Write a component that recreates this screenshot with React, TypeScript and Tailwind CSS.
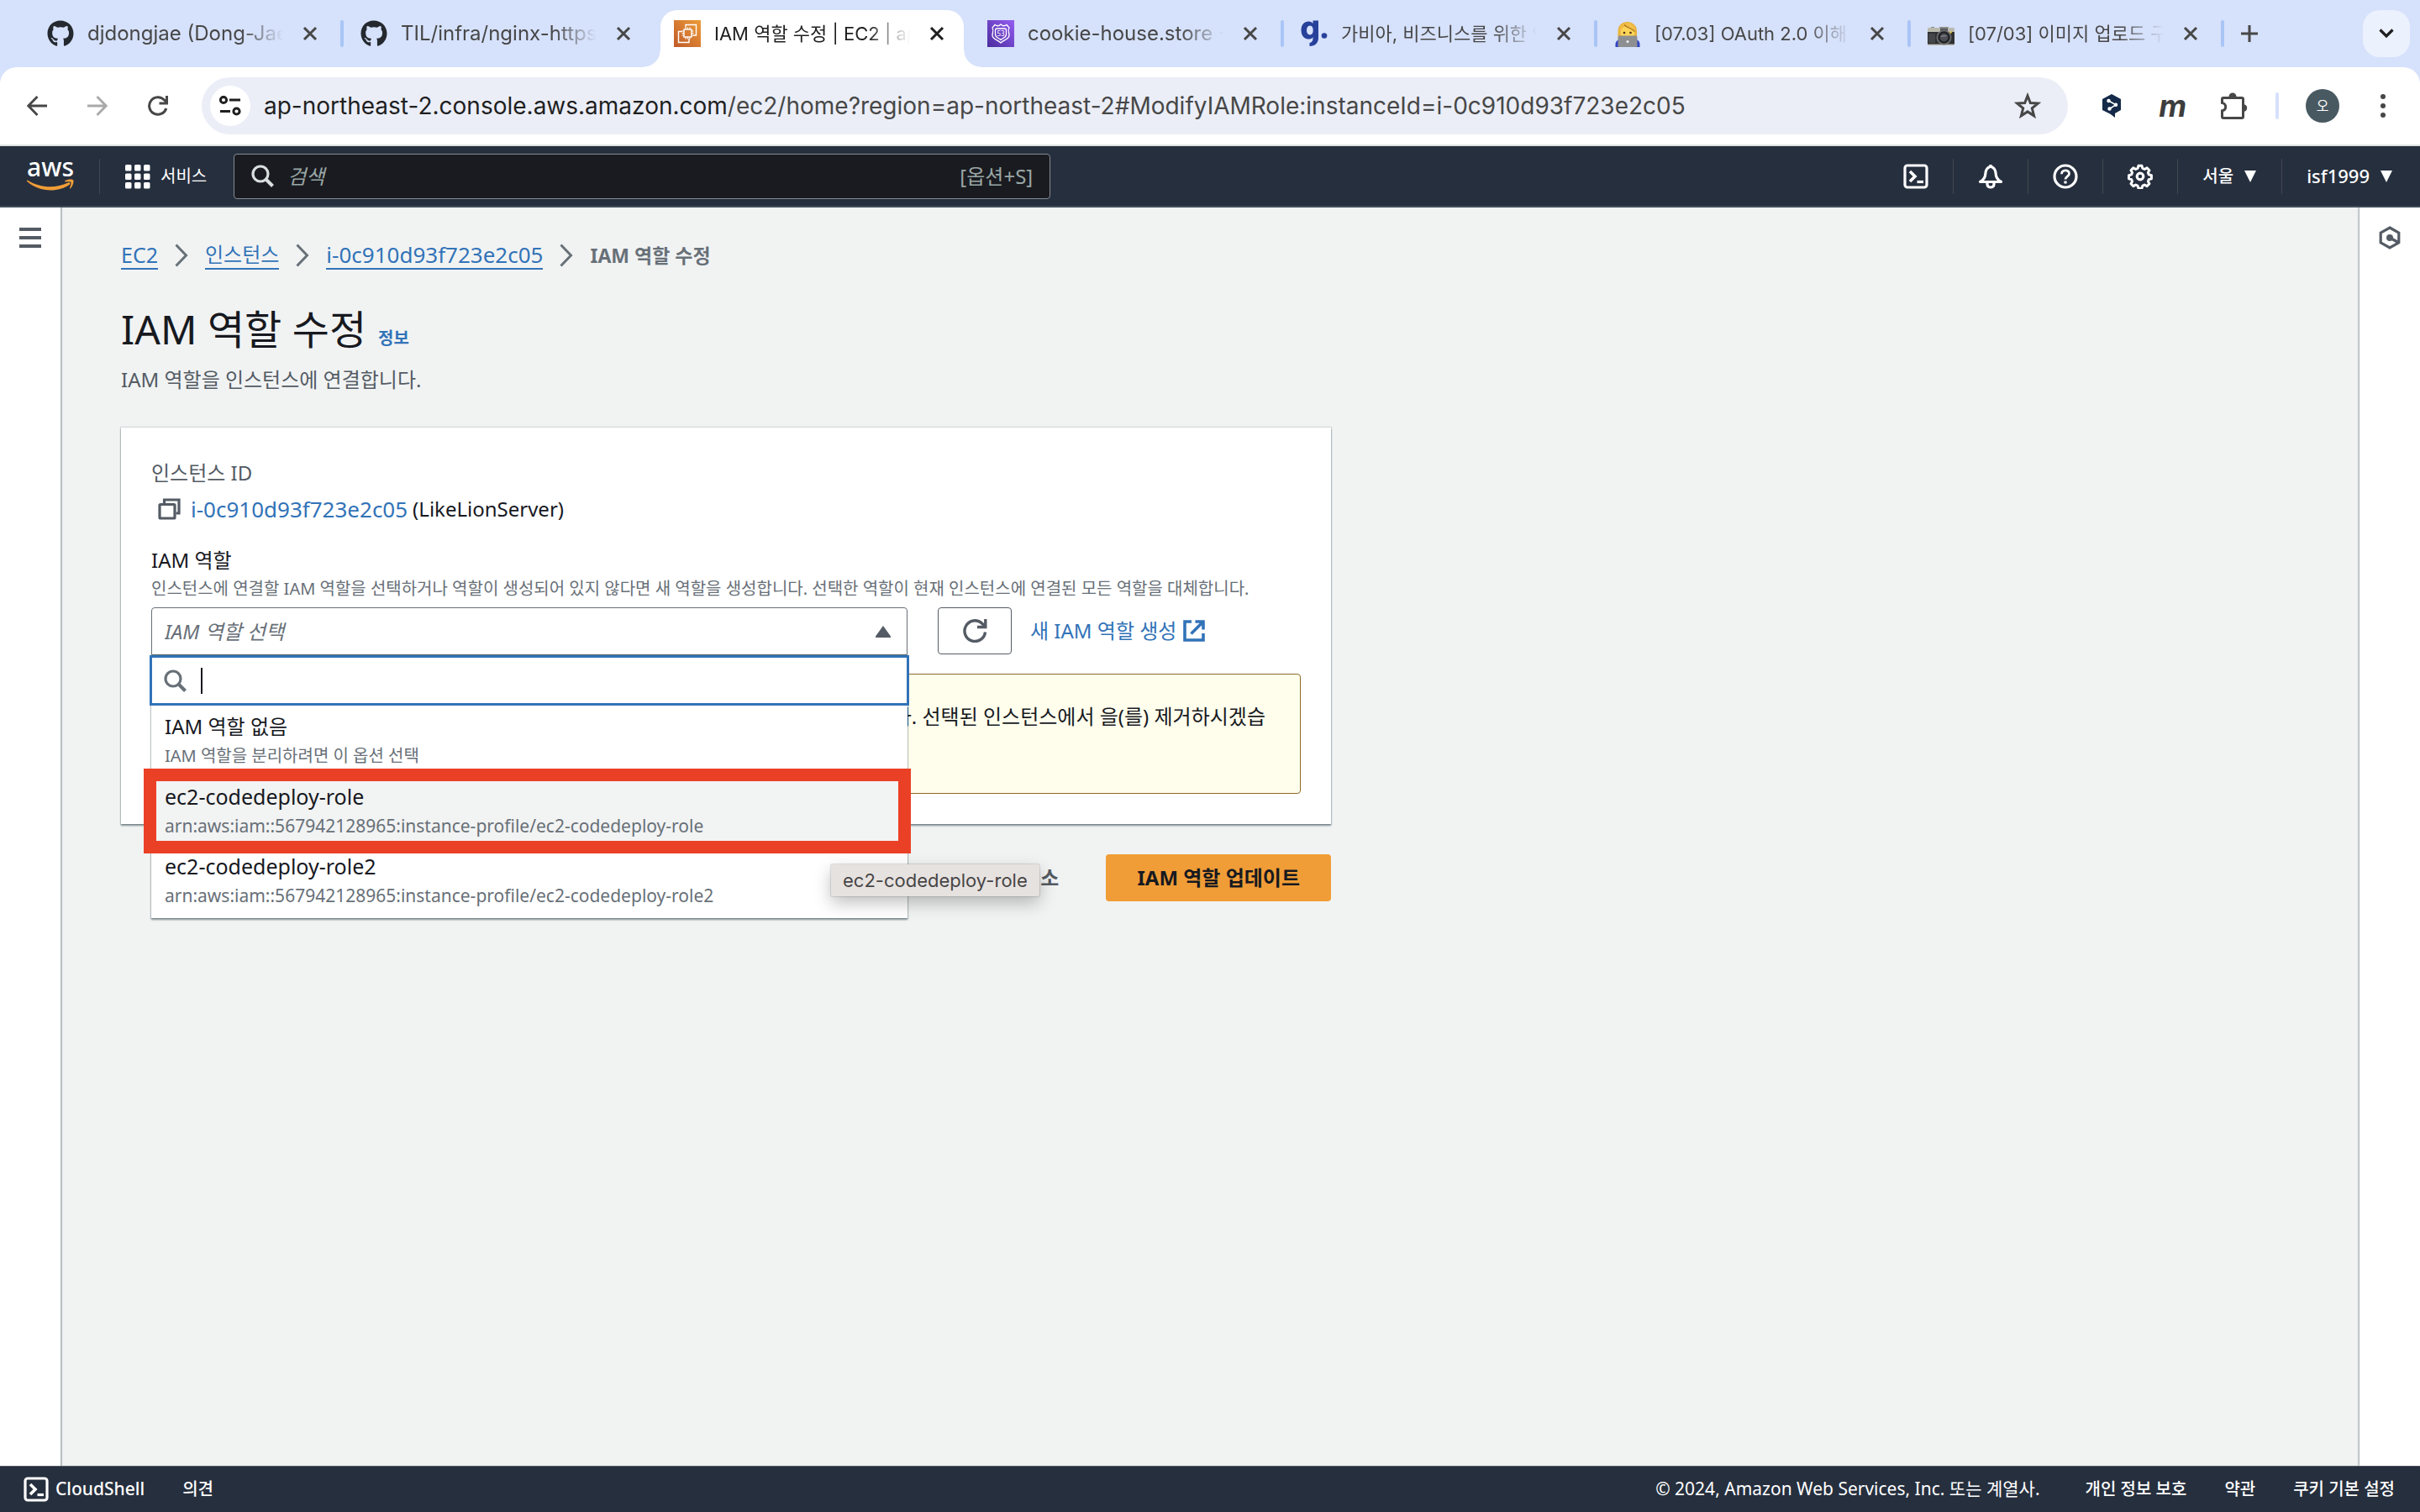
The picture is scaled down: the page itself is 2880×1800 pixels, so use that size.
import React from "react";
import { FaGithub } from "react-icons/fa";

type IconProps = { className?: string };

const CloseIcon = () => (
  <svg viewBox="0 0 18 18" className="size-[18px]" fill="none" stroke="currentColor" strokeWidth="3">
    <path d="M2 2l14 14M16 2L2 16" />
  </svg>
);

const Ec2Favicon = () => (
  <svg viewBox="0 0 32 32" className="size-8">
    <defs>
      <linearGradient id="ec2" x1="0" y1="1" x2="1" y2="0">
        <stop offset="0" stopColor="#bf5a2a" />
        <stop offset="1" stopColor="#ee9c38" />
      </linearGradient>
    </defs>
    <rect width="32" height="32" fill="url(#ec2)" />
    <g fill="none" stroke="#fff" strokeWidth="1.4">
      <path d="M14 8.500V5.500h12.500V18H23M10 13.500H5.500V26.500H18V22" />
      <rect x="12" y="11" width="9" height="9" />
      <path d="M14 11V8.500M16.500 11V8.500M19 11V8.500M14 22.500V20M16.500 22.500V20M19 22.500V20M12 13H9.500M12 15.500H9.500M12 18H9.500M23.500 13H21M23.500 15.500H21M23.500 18H21" strokeWidth="1.200" />
    </g>
  </svg>
);

const Route53Favicon = () => (
  <svg viewBox="0 0 32 32" className="size-8">
    <defs>
      <linearGradient id="r53" x1="0" y1="1" x2="1" y2="0">
        <stop offset="0" stopColor="#4a2c9d" />
        <stop offset="1" stopColor="#945df2" />
      </linearGradient>
    </defs>
    <rect width="32" height="32" fill="url(#r53)" />
    <g fill="none" stroke="#fff" strokeWidth="1.300">
      <path d="M9 5.500c2 1.500 5 1.500 7-.5 2 2 5 2 7 .5l3 3.500c-2 3 0 6 0 9 0 5-6 5-10 9-4-4-10-4-10-9 0-3 2-6 0-9z" />
      <path d="M11.500 10h9c1 0 2 .8 2 2v5c0 4-4 4-6.500 6.500C13.500 21 9.500 21 9.500 17v-5c0-1.200 1-2 2-2z" />
    </g>
    <text x="16" y="19" textAnchor="middle" fontSize="8" fill="#fff" fontFamily="Noto Sans">53</text>
  </svg>
);

const GabiaFavicon = () => (
  <svg viewBox="0 0 32 32" className="size-8">
    <path fill="#27419b" fillRule="evenodd" d="M9.500 1.500c2.300 0 4 .9 5 2.400V.5h6.500v20.500c0 6-3.800 10-10.500 10v-4c2.800-.4 4-2.200 4-5.200v-1.500c-1 1.500-2.700 2.300-5 2.300C4.300 22.500.5 18.500.5 12S4.300 1.500 9.500 1.500zm1.500 5c-2.500 0-4 2.200-4 5.500s1.500 5.500 4 5.500 3.700-2.200 3.700-5.500-1.200-5.500-3.700-5.500z" />
    <circle cx="28" cy="18.500" r="3.300" fill="#27419b" />
  </svg>
);

const TechnologistFavicon = () => (
  <svg viewBox="0 0 32 32" className="size-8">
    <path d="M4.500 20V13C4.500 6 9.500 2 15.500 2S27 6 27 13v7z" fill="#e9b23e" />
    <path d="M1.500 32v-3c0-4 3-6 7-6H24c4 0 6.500 2 6.500 6v3z" fill="#3044c4" />
    <ellipse cx="16" cy="15" rx="8.500" ry="8.500" fill="#fcd458" />
    <path d="M6.500 15c1-5 4-7 5.500-9.500 3 3.500 8.500 4 12.500 8 1-7-4-10-9-10S6 7 6.500 15z" fill="#f3c04a" />
    <path d="M12 5.500c3 3.500 8.500 4 12.500 8" fill="none" stroke="#a8721c" strokeWidth="1.200" />
    <circle cx="12" cy="15" r="1.300" fill="#4a2c1a" />
    <circle cx="19.500" cy="15" r="1.300" fill="#4a2c1a" />
    <rect x="4.500" y="18.500" width="23" height="13.500" rx="1.500" fill="#8e8f92" />
    <circle cx="16" cy="25.500" r="1.500" fill="#f2f2f2" />
  </svg>
);

const CameraFavicon = () => (
  <svg viewBox="0 0 32 32" className="size-8">
    <path d="M4 8h4v2H4zM14 8h11v3H14z" fill="#8b8c88" />
    <rect x="0" y="9" width="32" height="21" rx="1.500" fill="#b9b9ae" />
    <rect x="0" y="14" width="32" height="14.500" fill="#2f3032" />
    <path d="M1 16h8v11H1z" fill="#45464a" />
    <rect x="15" y="9.500" width="9" height="3.500" fill="#55575a" />
    <circle cx="19.500" cy="20.500" r="9" fill="#6d6f73" />
    <circle cx="19.500" cy="20.500" r="7.200" fill="#1e1f21" />
    <circle cx="19.500" cy="20.500" r="5" fill="#4b4e54" />
    <path d="M15.500 20c1-2 5-3 8-1z" fill="#888c93" />
    <circle cx="27.500" cy="14.500" r="1.300" fill="#e8c94a" />
  </svg>
);

const CloudShellIcon = ({ className }: IconProps) => (
  <svg viewBox="0 0 30 30" className={className} fill="none" stroke="currentColor" strokeWidth="3.200">
    <rect x="2" y="2" width="26" height="26" rx="3" />
    <path d="M8 9l6 6-6 6" strokeWidth="3.600" />
    <path d="M16.500 21.500H24" />
  </svg>
);

const BellIcon = () => (
  <svg viewBox="0 0 30 30" className="size-[30px]" fill="none" stroke="currentColor" strokeWidth="3.200" strokeLinejoin="round">
    <path d="M15 3c-4 1.500-6.200 4.500-6.200 9 0 4.500-2 7-6.300 9.500h25c-4.300-2.500-6.300-5-6.300-9.500 0-4.500-2.200-7.500-6.200-9z" />
    <path d="M15 3V1M11 22v2.500c0 2 1.800 3.500 4 3.500s4-1.500 4-3.500V22" />
  </svg>
);

const HelpIcon = () => (
  <svg viewBox="0 0 30 30" className="size-[30px]" fill="none" stroke="currentColor" strokeWidth="3.200">
    <circle cx="15" cy="15" r="13" />
    <path d="M10.500 12.200c0-2.600 1.900-4.400 4.500-4.400s4.500 1.600 4.500 4c0 3.400-4.500 3.400-4.500 6.700" strokeWidth="2.800" />
    <path d="M15 20.500v3" />
  </svg>
);

const GearIcon = () => (
  <svg viewBox="0 0 30 30" className="size-[30px]" fill="none" stroke="currentColor" strokeWidth="3.200" strokeLinejoin="round">
    <path d="M12.800 2h4.400l.9 3.300 2.600 1.100 3-1.700 3.100 3.100-1.700 3 1 2.500 3.400.9v4.400l-3.400.9-1 2.500 1.700 3-3.100 3.100-3-1.700-2.600 1.100-.9 3.300h-4.400l-.9-3.300-2.600-1.100-3 1.700L3.200 25l1.700-3-1-2.500-3.400-.9v-4.400l3.400-.9 1-2.500-1.700-3 3.100-3.100 3 1.700 2.600-1.100z" transform="translate(1 0.500) scale(0.930)" />
    <circle cx="15" cy="15" r="3.800" />
  </svg>
);

const GridIcon = () => (
  <svg viewBox="0 0 30 30" className="size-[30px]" fill="currentColor">
    {[1, 11.5, 22].map((y) =>
      [0, 11, 22].map((x) => <rect key={`${x}-${y}`} x={x} y={y} width="7.500" height="7.500" rx="1.500" />)
    )}
  </svg>
);

const SearchIcon = ({ className }: IconProps) => (
  <svg viewBox="0 0 27 27" className={className} fill="none" stroke="currentColor" strokeWidth="3.200">
    <circle cx="11" cy="11" r="9" />
    <path d="M17.500 17.500L25.500 25.500" strokeWidth="4" />
  </svg>
);

const Divider = () => <span className="h-[42px] w-px bg-[#414750]" />;

const Triangle = () => (
  <svg viewBox="0 0 16 14" className="h-[14px] w-4" fill="currentColor">
    <path d="M1 0h14L8 14z" />
  </svg>
);

const tabs = [
  { title: "djdongjae (Dong-Jae Oh)", icon: <FaGithub className="size-8 text-[#24292f]" />, size: "text-2xl" },
  { title: "TIL/infra/nginx-https.md", icon: <FaGithub className="size-8 text-[#24292f]" />, size: "text-2xl" },
  { title: "IAM 역할 수정 | EC2 | ap-northeast-2", icon: <Ec2Favicon />, size: "text-[22px]", active: true },
  { title: "cookie-house.store - Route 53", icon: <Route53Favicon />, size: "text-2xl" },
  { title: "가비아, 비즈니스를 위한 인터넷", icon: <GabiaFavicon />, size: "text-[22px]" },
  { title: "[07.03] OAuth 2.0 이해", icon: <TechnologistFavicon />, size: "text-[22px]" },
  { title: "[07/03] 이미지 업로드 구현", icon: <CameraFavicon />, size: "text-[22px]" },
];

function TabStrip() {
  return (
    <div className="flex h-20 items-end bg-[#d6e1fb] pr-3 pl-10 text-[#474747]">
      {tabs.map((t, i) => (
        <div
          key={t.title}
          className={
            t.active
              ? "relative flex h-[68px] max-w-[373px] flex-1 pb-3 text-[#1f1f1f]"
              : "relative flex h-[68px] max-w-[373px] flex-1 pb-3"
          }
        >
          {t.active && (
            <span className="absolute inset-y-0 right-3 left-0 rounded-t-[20px] bg-white">
              <span className="absolute bottom-0 -left-5 size-5 bg-[radial-gradient(circle_at_0_0,transparent_19px,white_20px)]" />
              <span className="absolute -right-5 bottom-0 size-5 bg-[radial-gradient(circle_at_100%_0,transparent_19px,white_20px)]" />
            </span>
          )}
          <div className="relative flex min-w-0 flex-1 items-center pr-1 pl-4">
            <span className="shrink-0">{t.icon}</span>
            <span
              className={`${t.size} ml-4 w-[233px] overflow-hidden whitespace-nowrap [mask-image:linear-gradient(to_right,black_78%,transparent)]`}
            >
              {t.title}
            </span>
            <button aria-label="탭 닫기" className="ml-[23px] shrink-0">
              <CloseIcon />
            </button>
            {i !== 1 && i !== 2 && <span className="ml-auto h-8 w-1 rounded-full bg-[#a9c5f6]" />}
          </div>
        </div>
      ))}
      <button aria-label="새 탭" className="mb-[30px] ml-4">
        <svg viewBox="0 0 20 20" className="size-5" fill="none" stroke="currentColor" strokeWidth="3">
          <path d="M10 0v20M0 10h20" />
        </svg>
      </button>
      <button aria-label="탭 검색" className="mb-3 ml-auto flex h-14 w-14 items-center justify-center rounded-[20px] bg-[#ebf1fd] text-[#1f1f1f]">
        <svg viewBox="0 0 18 12" className="h-3 w-[18px]" fill="none" stroke="currentColor" strokeWidth="3.200">
          <path d="M1.500 1.500L9 9l7.500-7.500" />
        </svg>
      </button>
    </div>
  );
}

function Toolbar() {
  return (
    <div className="bg-[#d6e1fb]">
      <div className="flex h-[94px] items-center rounded-t-[20px] border-b-2 border-[#dfe4e2] bg-white pr-10 pl-8 text-[#474747]">
        <button aria-label="뒤로">
          <svg viewBox="0 0 24 24" className="size-6" fill="none" stroke="currentColor" strokeWidth="2.800">
            <path d="M12.500 1L1.800 12l10.700 11M2 12h22" />
          </svg>
        </button>
        <button aria-label="앞으로" className="ml-12 text-[#a9a9a9]">
          <svg viewBox="0 0 24 24" className="size-6" fill="none" stroke="currentColor" strokeWidth="2.800">
            <path d="M11.500 1l10.700 11-10.700 11M22 12H0" />
          </svg>
        </button>
        <button aria-label="새로고침" className="ml-12">
          <svg viewBox="0 0 24 24" className="size-6" fill="none" stroke="currentColor" strokeWidth="3">
            <path d="M21.800 15A10.300 10.300 0 1 1 19.500 5l2.500 2.800" />
            <path d="M22.500 0v9H13.500" />
          </svg>
        </button>
        <div className="ml-10 flex h-[68px] flex-1 items-center rounded-full bg-[#ebeef7] pr-8 pl-2.5">
          <button aria-label="사이트 정보" className="flex size-12 items-center justify-center rounded-full bg-white text-[#1f1f1f]">
            <svg viewBox="0 0 26 24" className="h-6 w-[26px]" fill="none" stroke="currentColor" strokeWidth="3">
              <circle cx="5" cy="5" r="3.600" />
              <path d="M12 5h13M1 18.500h12" />
              <circle cx="20.500" cy="18.500" r="3.600" />
            </svg>
          </button>
          <p className="ml-4 flex-1 text-[28px] whitespace-nowrap">
            <span className="text-[#1f1f1f]">ap-northeast-2.console.aws.amazon.com</span>
            /ec2/home?region=ap-northeast-2#ModifyIAMRole:instanceId=i-0c910d93f723e2c05
          </p>
          <button aria-label="북마크">
            <svg viewBox="0 0 32 32" className="size-8" fill="none" stroke="currentColor" strokeWidth="3">
              <path d="M16 4l3.300 8.500 9 .6-7 5.800 2.300 8.900L16 22.900l-7.600 4.900 2.300-8.900-7-5.800 9-.6z" />
            </svg>
          </button>
        </div>
        <svg viewBox="0 0 24 28" className="ml-10 h-7 w-6">
          <path d="M12 0l11 6v13l-7 4v5l-5.500-4.200L1 19V6z" fill="#152a49" />
          <g stroke="#fff" strokeWidth="1.500" fill="#fff">
            <path d="M8.500 8L17 12.800 9.500 17.500" fill="none" />
            <circle cx="8.500" cy="8" r="1.500" />
            <circle cx="17" cy="12.800" r="1.500" />
            <circle cx="9.500" cy="17.500" r="1.500" />
          </g>
        </svg>
        <span className="ml-11 text-[36px] leading-10 font-bold italic text-[#3d3d3d]">m</span>
        <button aria-label="확장 프로그램" className="ml-10">
          <svg viewBox="0 0 34 32" className="h-8 w-[34px]" fill="currentColor">
            <path fillRule="evenodd" d="M3 5h7.500a4.500 4.500 0 0 1 9 0H26a3 3 0 0 1 3 3v6.200a4.500 4.500 0 0 1 0 8.600V29a3 3 0 0 1-3 3H4a3 3 0 0 1-3-3v-8.600c3 0 4.200-1.200 4.200-3.200S4 13.800 1 13.800V8a3 3 0 0 1 2-3zm1 3v3.400c2.600.8 4.200 3 4.200 5.800S6.600 22.300 4 23v6h22V8z" />
          </svg>
        </button>
        <span className="ml-8 h-8 w-1 rounded-full bg-[#d6e1fb]" />
        <span className="ml-8 flex size-10 items-center justify-center rounded-full bg-[#495962] text-base text-white">오</span>
        <button aria-label="메뉴" className="ml-12">
          <svg viewBox="0 0 8 28" className="h-7 w-2" fill="currentColor">
            <circle cx="4" cy="3" r="3" />
            <circle cx="4" cy="14" r="3" />
            <circle cx="4" cy="25" r="3" />
          </svg>
        </button>
      </div>
    </div>
  );
}

function AwsNav() {
  return (
    <nav className="flex h-[73px] items-center border-b-2 border-[#414d5c] bg-[#262f3e] pr-8 pl-8 text-white">
      <a href="#home" aria-label="AWS" className="flex w-14 flex-col items-center">
        <span className="-mt-2 text-[30px] leading-7 font-medium">aws</span>
        <svg viewBox="0 0 56 14" className="h-[14px] w-14">
          <path d="M.5 1.500C16 11 34 11.500 49 4.500c2-1 3.500 1 1.500 2.500C37 16.500 14 16 0 2.800-.5 2 0 1.200.5 1.500z" fill="#f09d37" />
          <path d="M45.500 2c3-2 8.500-2 9.700-.8 1 1.500-.3 7.300-3.200 10-.6.500-1.200.2-1-.5 1-2.500 2-5.800 1.300-6.900-.7-1-4-.6-6.300-.4-.8 0-1-.8-.5-1.400z" fill="#f09d37" />
        </svg>
      </a>
      <span className="ml-[30px] flex">
        <Divider />
      </span>
      <button className="ml-[30px] flex items-center gap-3 text-xl">
        <GridIcon />
        서비스
      </button>
      <label className="ml-8 flex h-[54px] w-1/3 max-w-[972px] flex-1 shrink-0 basis-[972px] items-center rounded-[4px] border border-[#848b91] bg-[#1a1b20] pr-5 pl-5 text-2xl text-[#9aa7a6]">
        <SearchIcon className="size-[27px] shrink-0 text-[#d8dfde]" />
        <input aria-label="검색" placeholder="검색" className="ml-4 min-w-0 flex-1 bg-transparent outline-none placeholder:text-[#9aa7a6] placeholder:italic" />
        <span>[옵션+S]</span>
      </label>
      <div className="ml-auto flex items-center gap-[29px]">
        <button aria-label="CloudShell"><CloudShellIcon className="size-[30px]" /></button>
        <Divider />
        <button aria-label="알림"><BellIcon /></button>
        <Divider />
        <button aria-label="도움말"><HelpIcon /></button>
        <Divider />
        <button aria-label="설정"><GearIcon /></button>
        <Divider />
        <button className="flex items-center gap-3 text-xl font-medium">서울 <Triangle /></button>
        <Divider />
        <button className="flex items-center gap-3 text-[22px] font-medium">isf1999 <Triangle /></button>
      </div>
    </nav>
  );
}

const Chevron = () => (
  <svg viewBox="0 0 16 28" className="mx-5 h-7 w-4" fill="none" stroke="#687078" strokeWidth="3">
    <path d="M1.500 1.500L13.500 14 1.500 26.500" />
  </svg>
);

const options = [
  { name: "IAM 역할 없음", desc: "IAM 역할을 분리하려면 이 옵션 선택", nameSize: "text-2xl", descSize: "text-xl" },
  {
    name: "ec2-codedeploy-role",
    desc: "arn:aws:iam::567942128965:instance-profile/ec2-codedeploy-role",
    nameSize: "text-[25px]",
    descSize: "text-[21px]",
    marked: true,
  },
  {
    name: "ec2-codedeploy-role2",
    desc: "arn:aws:iam::567942128965:instance-profile/ec2-codedeploy-role2",
    nameSize: "text-[25px]",
    descSize: "text-[21px]",
  },
];

function RoleMenu() {
  return (
    <div className="absolute top-full right-0 left-0 z-10 bg-white pb-1 shadow-[0_2px_2px_rgba(0,28,36,0.45),0_0_1px_1px_rgba(0,28,36,0.12)]">
      <label className="-mx-0.5 flex h-[60px] items-center border-3 border-[#3273b8] bg-white px-3.5 text-[#687078]">
        <SearchIcon className="size-[27px]" />
        <span className="ml-[17px] h-[31px] w-0.5 bg-[#17191f]" />
        <input aria-label="역할 검색" className="h-10 flex-1 bg-transparent text-2xl outline-none" />
      </label>
      {options.map((o) => (
        <div key={o.name} className={o.marked ? "relative z-10" : "relative"}>
          <button
            className={
              o.marked
                ? "block w-full bg-[#f2f3f3] px-4 pt-2 pb-[5px] text-left"
                : "block w-full px-4 pt-2 pb-[5px] text-left"
            }
          >
            <span className={`${o.nameSize} block leading-[34px] text-[#17191f]`}>{o.name}</span>
            <span className={`${o.descSize} block leading-9 text-[#687078]`}>{o.desc}</span>
          </button>
          {o.marked && (
            <>
              <span className="pointer-events-none absolute -top-2 -right-1 -bottom-[10px] -left-[9px] border-[15px] border-[#ea4026]" />
              <span
                role="tooltip"
                className="absolute top-[106px] left-[809px] rounded-[2px] bg-[#e6e2e0] px-3.5 font-[Inter] text-[22px] leading-[38px] whitespace-nowrap text-[#474545] shadow-[0_0_1px_1px_rgba(0,0,0,0.12),0_8px_20px_rgba(0,0,0,0.25)]"
              >
                ec2-codedeploy-role
              </span>
            </>
          )}
        </div>
      ))}
    </div>
  );
}

function RoleForm() {
  return (
    <main className="min-w-0 flex-1 bg-[#f1f3f3] px-[72px] pt-[41px] text-2xl shadow-[inset_2px_0_1px_rgba(0,28,36,0.25)]">
      <div className="flex h-8 items-center text-[#3273b8]">
        <a href="#ec2" className="border-b-2 border-[#3273b8] text-[25px] leading-8">EC2</a>
        <Chevron />
        <a href="#instances" className="border-b-2 border-[#3273b8] leading-8">인스턴스</a>
        <Chevron />
        <a href="#instance" className="border-b-2 border-[#3273b8] text-[26px] leading-8">i-0c910d93f723e2c05</a>
        <Chevron />
        <span className="text-[23px] font-bold text-[#687078]">IAM 역할 수정</span>
      </div>
      <div className="mt-[44px] flex items-baseline gap-3.5">
        <h1 className="text-5xl leading-14 text-[#17191f]">IAM 역할 수정</h1>
        <a href="#info" className="text-xl font-bold text-[#3273b8]">정보</a>
      </div>
      <p className="mt-3.5 leading-9 text-[#545b64]">IAM 역할을 인스턴스에 연결합니다.</p>

      <section className="mt-[39px] w-full max-w-[1440px] bg-white p-9 shadow-[0_2px_2px_rgba(0,28,36,0.45),0_0_1px_1px_rgba(0,28,36,0.12)]">
        <p className="leading-9 text-[#545b64]">인스턴스 ID</p>
        <p className="mt-[7px] flex items-center leading-9 text-[#17191f]">
          <button aria-label="복사" className="mr-3 ml-2 text-[#545b64]">
            <svg viewBox="0 0 27 26" className="h-[26px] w-[27px]" fill="none" stroke="currentColor" strokeWidth="3.200">
              <rect x="2" y="7.500" width="18" height="16.500" rx="1" />
              <path d="M7.500 6V2H25v16h-3.500" />
            </svg>
          </button>
          <a href="#instance" className="mr-1.5 text-[26px] text-[#3273b8]">i-0c910d93f723e2c05</a>
          (LikeLionServer)
        </p>
        <label htmlFor="role" className="mt-[25px] block leading-9 text-[#17191f]">IAM 역할</label>
        <p className="text-xl leading-8 text-[#687078]">
          인스턴스에 연결할 IAM 역할을 선택하거나 역할이 생성되어 있지 않다면 새 역할을 생성합니다. 선택한 역할이 현재 인스턴스에 연결된 모든 역할을 대체합니다.
        </p>
        <div className="mt-1.5 flex">
          <div className="relative w-[900px]">
            <select
              id="role"
              className="block h-[57px] w-full appearance-none rounded-t-[4px] border border-[#687078] bg-white px-[15px] text-2xl italic text-[#687078]"
            >
              <option>IAM 역할 선택</option>
            </select>
            <svg viewBox="0 0 18 14" className="pointer-events-none absolute top-[22px] right-5 h-[14px] w-[18px] text-[#545b64]" fill="currentColor">
              <path d="M9 0l9 12.500V14H0v-1.500z" />
            </svg>
            <RoleMenu />
          </div>
          <button aria-label="새로고침" className="ml-9 flex h-14 w-[88px] items-center justify-center rounded-[4px] border border-[#545b64] text-[#545b64]">
            <svg viewBox="0 0 30 28" className="h-7 w-[30px]" fill="none" stroke="currentColor" strokeWidth="3.400">
              <path d="M27.500 15.500A12.300 12.300 0 1 1 23.500 5l4 4" />
              <path d="M27.800 0v9.500H18" />
            </svg>
          </button>
          <a href="#create" className="ml-[22px] flex h-14 items-center gap-2 text-[#3273b8]">
            새 IAM 역할 생성
            <svg viewBox="0 0 26 26" className="size-[26px]" fill="none" stroke="currentColor" strokeWidth="3.600">
              <path d="M10 2H2v22h22v-8M14.500 2H24v9.500M24 2L9.500 16.500" />
            </svg>
          </a>
        </div>
        <div className="mt-[22px] min-h-[143px] rounded-[4px] border border-[#8d6a26] bg-[#fffeec] pt-8 pr-[41px] pl-9 text-right leading-9 text-[#17191f]">
          IAM 역할을 선택하지 않았습니다. 선택된 인스턴스에서 을(를) 제거하시겠습
        </div>
      </section>
      <div className="mt-9 flex w-full max-w-[1440px] items-center justify-end">
        <button className="mr-14 font-bold text-[#545b64]">취소</button>
        <button className="h-14 rounded-[4px] bg-[#f09d37] px-[37px] font-bold text-[#17191f]">IAM 역할 업데이트</button>
      </div>
    </main>
  );
}

export default function App() {
  return (
    <div className="flex min-h-screen flex-col bg-white">
      <header className="font-['Inter','Noto_Sans_CJK_KR',sans-serif]">
        <TabStrip />
        <Toolbar />
      </header>
      <div className="flex flex-1 flex-col font-['Noto_Sans','Noto_Sans_CJK_KR',sans-serif]">
        <AwsNav />
        <div className="flex flex-1">
          <aside className="flex w-[72px] justify-center pt-6">
            <button aria-label="메뉴 열기" className="flex h-6 w-[26px] flex-col justify-between text-[#545b64]">
              <span className="h-1 w-full bg-current" />
              <span className="h-1 w-full bg-current" />
              <span className="h-1 w-full bg-current" />
            </button>
          </aside>
          <RoleForm />
          <aside className="z-10 flex w-[72px] justify-center bg-white pt-[22px] shadow-[-1px_0_2px_rgba(0,28,36,0.4)]">
            <button aria-label="도구 패널" className="h-7 text-[#545b64]">
              <svg viewBox="0 0 26 28" className="h-7 w-[26px]" fill="none" stroke="currentColor" strokeWidth="3.200">
                <path d="M13 2l10.800 6.200v11.600L13 26 2.200 19.800V8.200z" />
                <circle cx="13" cy="14" r="4" fill="currentColor" stroke="none" />
                <path d="M13 14l10 5.500" />
              </svg>
            </button>
          </aside>
        </div>
        <footer className="flex h-[55px] items-center border-t border-[#545b64] bg-[#262f3e] pr-[30px] pl-7 text-xl font-medium text-white">
          <button className="flex items-center gap-2 text-[21px]">
            <CloudShellIcon className="size-[30px]" />
            CloudShell
          </button>
          <a href="#feedback" className="ml-[45px]">의견</a>
          <span className="ml-auto text-[21px] font-normal">© 2024, Amazon Web Services, Inc. 또는 계열사.</span>
          <a href="#privacy" className="ml-[54px]">개인 정보 보호</a>
          <a href="#terms" className="ml-[45px]">약관</a>
          <a href="#cookies" className="ml-[45px]">쿠키 기본 설정</a>
        </footer>
      </div>
    </div>
  );
}
